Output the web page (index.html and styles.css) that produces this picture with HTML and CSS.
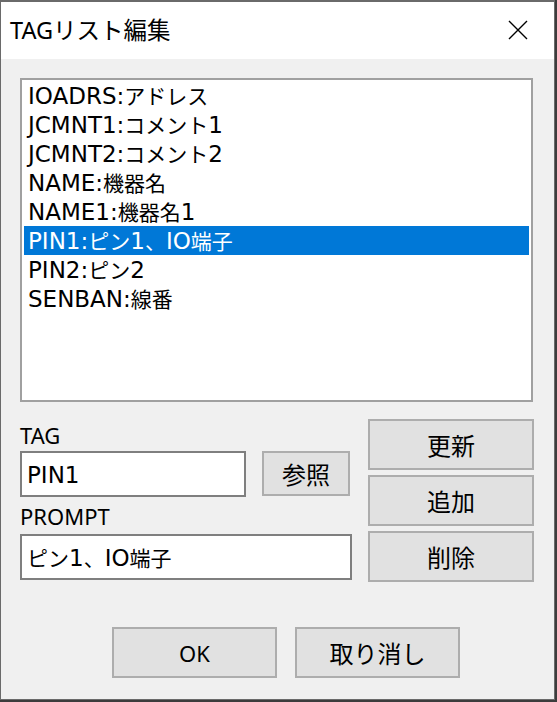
FILE: index.html
```html
<!DOCTYPE html>
<html lang="ja">
<head>
<meta charset="utf-8">
<title>TAGリスト編集</title>
<link rel="stylesheet" href="styles.css">
</head>
<body>
<div class="window">
  <div class="titlebar">
    <span class="title">TAGリスト編集</span>
    <span class="close" aria-label="閉じる">
      <svg width="20" height="20" viewBox="0 0 20 20"><path d="M1 1 L19 19 M19 1 L1 19" stroke="#000" stroke-width="1.4" fill="none"/></svg>
    </span>
  </div>
  <div class="content">
    <div class="listbox">
      <div class="item"><span class="en">IOADRS:</span>アドレス</div>
      <div class="item"><span class="en">JCMNT1:</span>コメント<span class="en">1</span></div>
      <div class="item"><span class="en">JCMNT2:</span>コメント<span class="en">2</span></div>
      <div class="item"><span class="en">NAME:</span>機器名</div>
      <div class="item"><span class="en">NAME1:</span>機器名<span class="en">1</span></div>
      <div class="item selected"><span class="en">PIN1:</span>ピン<span class="en">1</span>、<span class="en">IO</span>端子</div>
      <div class="item"><span class="en">PIN2:</span>ピン<span class="en">2</span></div>
      <div class="item"><span class="en">SENBAN:</span>線番</div>
    </div>
    <div class="editor">
      <div class="fields">
        <div class="label">TAG</div>
        <div class="tagrow">
          <div class="input tag"><span class="en">PIN1</span></div>
          <div class="btn ref">参照</div>
        </div>
        <div class="label prompt-label">PROMPT</div>
        <div class="input prompt">ピン<span class="en">1</span>、<span class="en">IO</span>端子</div>
      </div>
      <div class="actions">
        <div class="btn side">更新</div>
        <div class="btn side">追加</div>
        <div class="btn side">削除</div>
      </div>
    </div>
    <div class="footer">
      <div class="btn foot">OK</div>
      <div class="btn foot">取り消し</div>
    </div>
  </div>
</div>
</body>
</html>
```
FILE: styles.css
```css
html, body {
  margin: 0;
  padding: 0;
  background: #3c3c3c;
  width: 557px;
  height: 702px;
  overflow: hidden;
}
body {
  font-family: "Noto Sans CJK JP", "Noto Sans", sans-serif;
  color: #000;
}
.window {
  width: 555px;
  height: 700px;
  box-sizing: border-box;
  border: 1px solid #6a6a6a;
  border-top-width: 2px;
  background: #f0f0f0;
  display: flex;
  flex-direction: column;
}
.titlebar {
  height: 57px;
  background: #fff;
  display: flex;
  align-items: center;
  justify-content: space-between;
  padding: 0 26px 0 9px;
  flex: none;
}
.title {
  font-family: "Noto Sans", "Noto Sans CJK JP", sans-serif;
  font-size: 23.5px;
  line-height: 30px;
  margin-top: -2px;
}
.close {
  display: flex;
  width: 20px;
  height: 20px;
  margin-top: -1px;
}
.content {
  padding: 19px 20px 0 19px;
  display: flex;
  flex-direction: column;
}
.en {
  font-family: "DejaVu Sans", sans-serif;
  font-size: 23px;
}
.listbox {
  width: 513px;
  height: 324px;
  box-sizing: border-box;
  border: 2px solid #a0a0a0;
  background: #fff;
  padding: 1px 2px;
}
.item {
  height: 29px;
  line-height: 29px;
  font-size: 21px;
  padding-left: 4px;
  white-space: nowrap;
}
.item.selected {
  background: #0078d7;
  color: #fff;
}
.editor {
  display: flex;
  gap: 16px;
  margin-top: 17px;
}
.fields {
  width: 332px;
  display: flex;
  flex-direction: column;
}
.label {
  font-family: "Noto Sans", sans-serif;
  font-size: 22px;
  line-height: 32px;
  height: 32px;
}
.prompt-label {
  margin-top: 4px;
  height: 33px;
  line-height: 30px;
}
.tagrow {
  display: flex;
  align-items: flex-start;
  gap: 16px;
}
.input {
  box-sizing: border-box;
  height: 46px;
  border: 2px solid #7f7f7f;
  background: #fff;
  font-size: 21px;
  line-height: 42px;
  padding-left: 5px;
  white-space: nowrap;
}
.input.tag {
  width: 226px;
}
.input.prompt {
  width: 332px;
}
.btn {
  box-sizing: border-box;
  background: #e1e1e1;
  border: 2px solid #adadad;
  font-size: 24px;
  display: flex;
  align-items: center;
  justify-content: center;
}
.btn.ref {
  width: 88px;
  height: 45px;
}
.actions {
  display: flex;
  flex-direction: column;
  gap: 5px;
}
.btn.side {
  width: 166px;
  height: 51px;
}
.footer {
  display: flex;
  gap: 18px;
  margin-top: 45px;
  padding-left: 92px;
}
.btn.foot {
  width: 165px;
  height: 51px;
}
.btn.foot:first-child {
  font-family: "Noto Sans", sans-serif;
  font-size: 22px;
}
```
